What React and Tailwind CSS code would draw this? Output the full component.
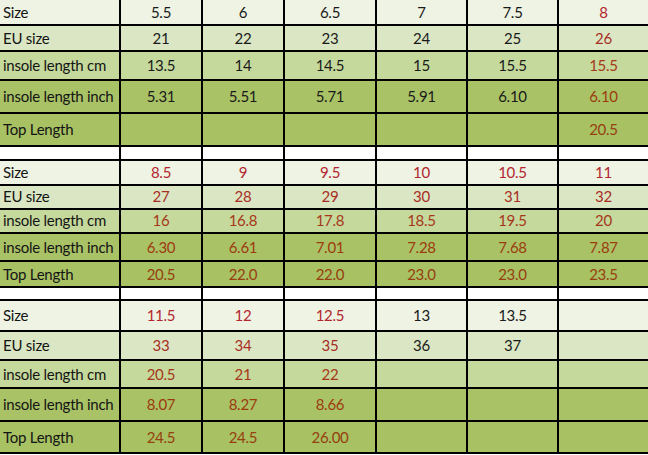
const COLS = "grid-cols-[121px_82px_82px_92px_91px_91px_89px]";

const LABELS = ["Size", "EU size", "insole length cm", "insole length inch", "Top Length"];

const BG = ["bg-[#eef3e3]", "bg-[#dbe7c4]", "bg-[#c5d99c]", "bg-[#a9c266]", "bg-[#a7c163]"];
const RED = ["text-[#b3262f]", "text-[#a82e26]", "text-[#a5381a]", "text-[#9c3b0e]", "text-[#96400f]"];

// each value: [text, isRed]
const BLOCKS = [
  {
    heights: ["h-[26px]", "h-[26px]", "h-[29px]", "h-[33px]", "h-[33px]"],
    rows: [
      [["5.5"], ["6"], ["6.5"], ["7"], ["7.5"], ["8", 1]],
      [["21"], ["22"], ["23"], ["24"], ["25"], ["26", 1]],
      [["13.5"], ["14"], ["14.5"], ["15"], ["15.5"], ["15.5", 1]],
      [["5.31"], ["5.51"], ["5.71"], ["5.91"], ["6.10"], ["6.10", 1]],
      [[""], [""], [""], [""], [""], ["20.5", 1]],
    ],
    gap: "h-[14px]",
  },
  {
    heights: ["h-[24px]", "h-[24px]", "h-[25px]", "h-[28px]", "h-[26px]"],
    rows: [
      [["8.5", 1], ["9", 1], ["9.5", 1], ["10", 1], ["10.5", 1], ["11", 1]],
      [["27", 1], ["28", 1], ["29", 1], ["30", 1], ["31", 1], ["32", 1]],
      [["16", 1], ["16.8", 1], ["17.8", 1], ["18.5", 1], ["19.5", 1], ["20", 1]],
      [["6.30", 1], ["6.61", 1], ["7.01", 1], ["7.28", 1], ["7.68", 1], ["7.87", 1]],
      [["20.5", 1], ["22.0", 1], ["22.0", 1], ["23.0", 1], ["23.0", 1], ["23.5", 1]],
    ],
    gap: "h-[13px]",
  },
  {
    heights: ["h-[31px]", "h-[29px]", "h-[28px]", "h-[33px]", "h-[32px]"],
    rows: [
      [["11.5", 1], ["12", 1], ["12.5", 1], ["13"], ["13.5"], [""]],
      [["33", 1], ["34", 1], ["35", 1], ["36"], ["37"], [""]],
      [["20.5", 1], ["21", 1], ["22", 1], [""], [""], [""]],
      [["8.07", 1], ["8.27", 1], ["8.66", 1], [""], [""], [""]],
      [["24.5", 1], ["24.5", 1], ["26.00", 1], [""], [""], [""]],
    ],
  },
];

function Row({ label, values, bg, height, red }) {
  return (
    <div className={`grid ${COLS} ${height} ${bg}`}>
      <div className="flex items-center border-r-2 border-b-2 border-black pl-[3px] text-[#141414]">
        {label}
      </div>
      {values.map(([v, r], i) => (
        <div
          key={i}
          className={`flex items-center justify-center border-b-2 border-black ${
            i < 5 ? "border-r-2" : ""
          } ${r ? red : "text-[#1a1a1a]"}`}
        >
          {v}
        </div>
      ))}
    </div>
  );
}

function Gap({ height }) {
  return (
    <div className={`grid ${COLS} ${height} bg-white`}>
      {[0, 1, 2, 3, 4, 5, 6].map((i) => (
        <div key={i} className={`border-b-2 border-black ${i < 6 ? "border-r-2" : ""}`} />
      ))}
    </div>
  );
}

export default function App() {
  return (
    <div className="w-[648px] h-[455px] overflow-hidden bg-white font-['Lato',sans-serif] text-[15px] tracking-[-0.25px]">
      {BLOCKS.map((b, bi) => (
        <div key={bi}>
          {b.rows.map((vals, ri) => (
            <Row
              key={ri}
              label={LABELS[ri]}
              values={vals}
              bg={BG[ri]}
              height={b.heights[ri]}
              red={RED[ri]}
            />
          ))}
          {b.gap && <Gap height={b.gap} />}
        </div>
      ))}
    </div>
  );
}
